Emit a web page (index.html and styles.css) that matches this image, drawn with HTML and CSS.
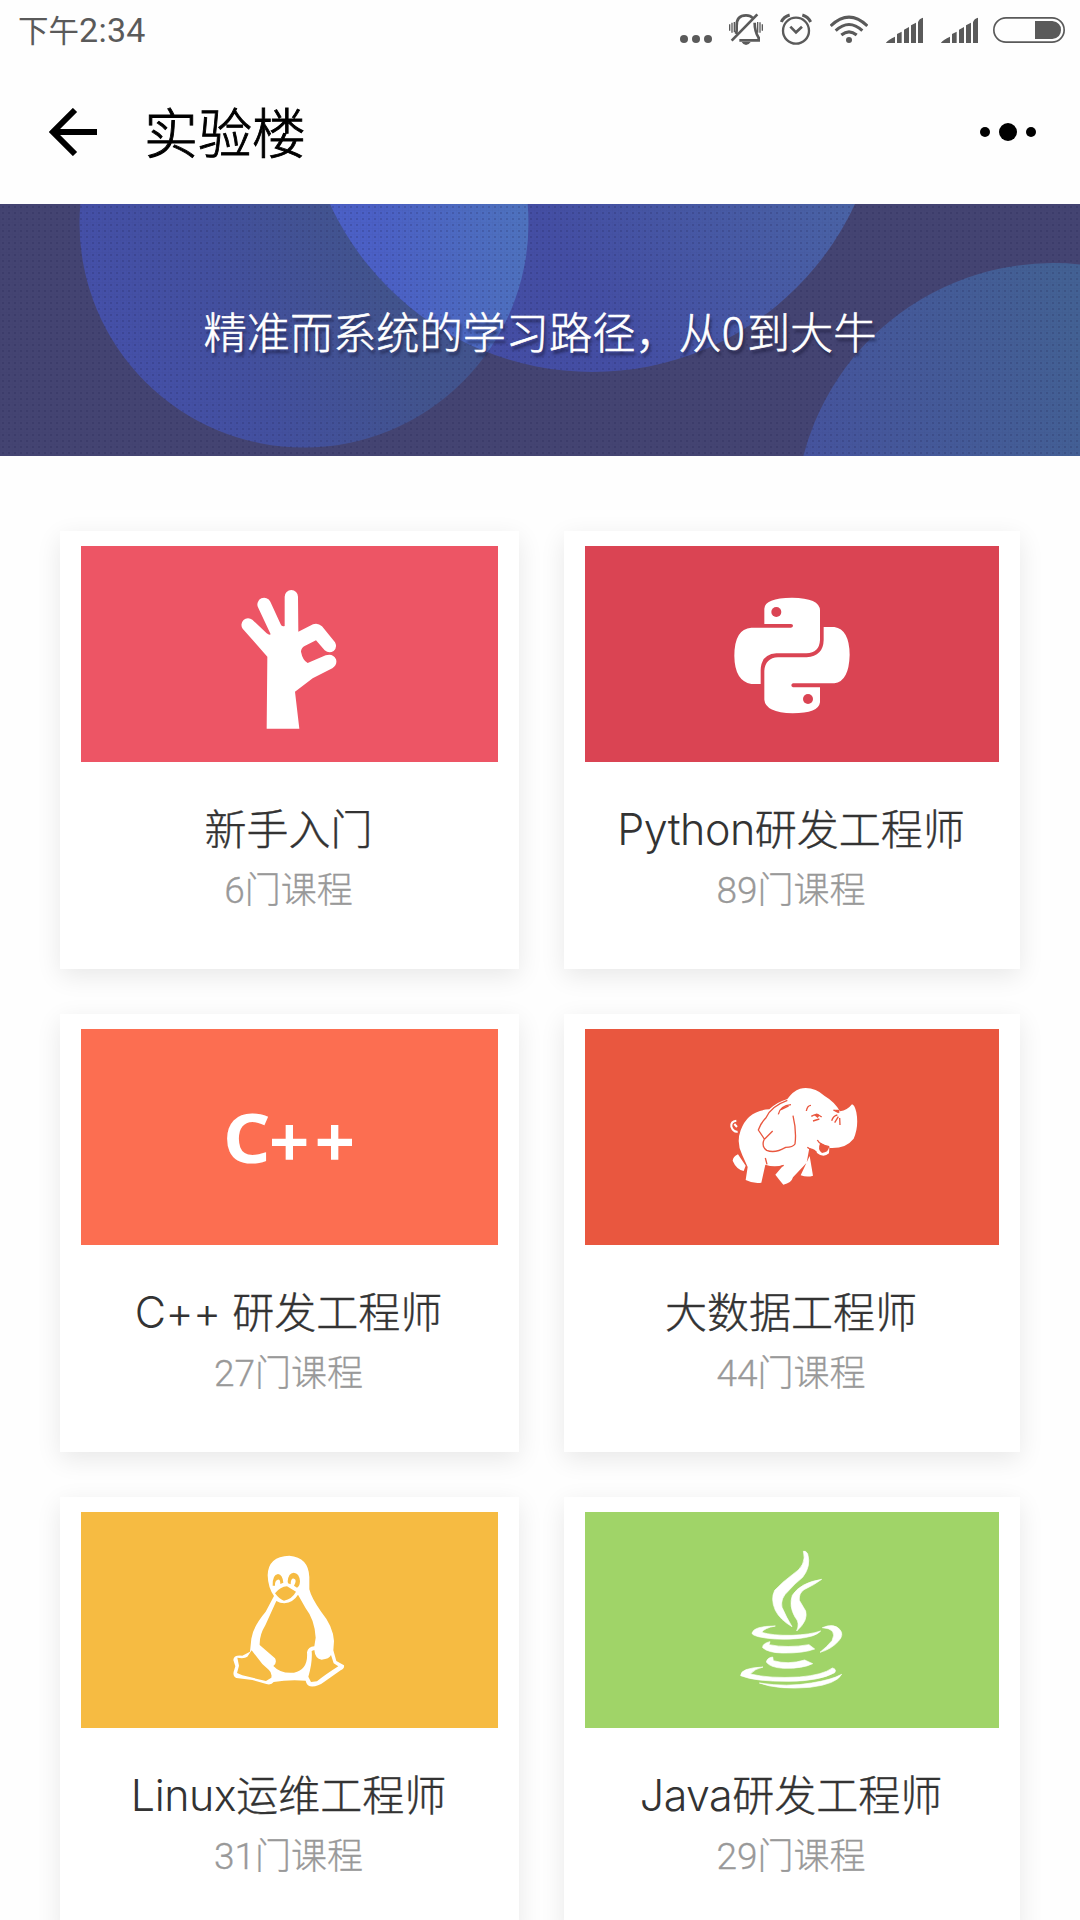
FILE: index.html
```html
<!DOCTYPE html>
<html lang="zh-CN">
<head>
<meta charset="utf-8">
<title>实验楼</title>
<link rel="stylesheet" href="styles.css">
</head>
<body>
<div class="status">
  <div class="time">下午<span class="clock">2:34</span></div>
  <div class="status-icons">
    <svg class="i-dots" width="32" height="33" viewBox="60 39 96 99"><circle cx="72" cy="117" r="12"/><circle cx="108" cy="117" r="12"/><circle cx="144" cy="117" r="12"/></svg>
    <svg class="i-bell" width="34" height="33" viewBox="207 39 102 99"><path class="ln" stroke-width="8" d="M228 102Q231 92 230 78Q229 46 258 46Q272 46 277 53M284 68Q284 95 296 113L296 121H238M215 122L292 43"/><path class="ln" stroke-width="4" d="M209 73V92M216 68V98M223 66V97M293 66V98M300 67V98M307 73V92"/><path d="M245 126H272Q266 135 258 135Q250 135 245 126Z"/></svg>
    <svg class="i-alarm" width="32" height="33" viewBox="360 39 96 99"><circle class="ln" stroke-width="7" cx="408" cy="92" r="39"/><path class="ln" stroke-width="8" d="M391 80L408 97L426 80"/><path class="ln" stroke-width="9" d="M364 66Q371 50 389 45M427 45Q444 50 452 66"/></svg>
    <svg class="i-wifi" width="38" height="33" viewBox="510 39 114 99"><path class="ln" stroke-width="9" d="M512 78Q567 25 622 78M527 92Q567 55 607 92M544 105Q567 86 590 105"/><circle cx="567" cy="120" r="9"/></svg>
    <svg class="i-signal" width="37" height="33" viewBox="678 39 111 99"><path d="M678 128Q685 119 705 110V129H678ZM711 129V102L725 95V129ZM732 129V89L747 81V129ZM753 129V76L768 68V129ZM774 129V67Q776 57 789 53V129Z"/></svg>
    <svg class="i-signal" width="37" height="33" viewBox="678 39 111 99"><path d="M678 128Q685 119 705 110V129H678ZM711 129V102L725 95V129ZM732 129V89L747 81V129ZM753 129V76L768 68V129ZM774 129V67Q776 57 789 53V129Z"/></svg>
    <svg class="i-battery" width="72" height="33" viewBox="999 39 216 99"><rect class="ln" stroke-width="5" x="1001.5" y="53.500" width="211" height="73" rx="36.500"/><path d="M1125 63H1177Q1203 67 1203 90Q1203 113 1177 117H1125Z"/></svg>
  </div>
</div>
<header class="appbar">
  <svg class="back" width="48" height="48" viewBox="0 0 48 48"><path d="M26 2L4 24L26 46M4 24H48"/></svg>
  <h1 class="title">实验楼</h1>
  <svg class="more" width="56" height="18" viewBox="0 0 56 18"><circle cx="5" cy="9" r="5"/><circle cx="28" cy="9" r="9"/><circle cx="51" cy="9" r="5"/></svg>
</header>
<section class="banner">
  <svg class="banner-art" width="1080" height="252" viewBox="0 204 1080 252">
    <defs>
      <linearGradient id="ga" gradientUnits="userSpaceOnUse" x1="80" y1="300" x2="400" y2="180"><stop offset="0" stop-color="#4550aa"/><stop offset=".4" stop-color="#43509f"/><stop offset=".85" stop-color="#42548e"/></linearGradient>
      <linearGradient id="gb" x1="0" y1="1" x2="1" y2=".4"><stop offset="0" stop-color="#454da6"/><stop offset=".42" stop-color="#444ea4"/><stop offset="1" stop-color="#4c6ca6"/></linearGradient>
      <linearGradient id="gab" gradientUnits="userSpaceOnUse" x1="380" y1="260" x2="530" y2="240"><stop offset="0" stop-color="#4b60c6"/><stop offset="1" stop-color="#4e72be"/></linearGradient>
      <linearGradient id="gc" x1="0" y1=".5" x2=".6" y2=".3"><stop offset="0" stop-color="#46529f"/><stop offset="1" stop-color="#436194"/></linearGradient>
      <clipPath id="clipA"><circle cx="304" cy="223" r="224.500"/></clipPath>
      <pattern id="grain" width="6" height="6" patternUnits="userSpaceOnUse"><rect width="2" height="2" x="2" y="2" fill="#20204a" opacity=".2"/><path d="M0 0H6M0 0V6" stroke="#20204a" stroke-width="1" opacity=".08"/></pattern>
    </defs>
    <rect y="204" width="1080" height="252" fill="#444472"/>
    <circle cx="304" cy="223" r="224.500" fill="url(#ga)"/>
    <circle cx="592.500" cy="83" r="289" fill="url(#gb)"/>
    <circle cx="592.500" cy="83" r="289" fill="url(#gab)" clip-path="url(#clipA)"/>
    <circle cx="1053" cy="521" r="258" fill="url(#gc)"/>
    <rect y="204" width="1080" height="252" fill="url(#grain)"/>
  </svg>
  <p class="slogan">精准而系统的学习路径，从<span class="zero">0</span>到大牛</p>
</section>
<main class="grid">
  <article class="card">
    <div class="tile rose"><svg width="417" height="216" viewBox="-417 -72 1251 648"><path fill="#fff" d="M140 476L142 260L68 176A20 20 0 0 1 97 149L140 190Q148 197 152 193L114 112A20 20 0 0 1 151 95L182 163Q185 171 194 168L194 80A20 20 0 0 1 234 80L235 185L279 163Q294 158 306 169L345 217Q353 232 341 243Q327 252 314 241L288 211L254 228Q243 234 243 245Q248 271 263 279L317 256Q339 249 348 268Q353 284 337 295L278 325L225 365L238 476Z"/></svg></div>
    <h2 class="name">新手入门</h2>
    <p class="count"><span class="num">6</span>门课程</p>
  </article>
  <article class="card">
    <div class="tile crimson"><svg width="414" height="216" viewBox="-375 -72 1242 648"><path fill="#fff" d="M163 162V116Q164 84 246 83Q329 84 330 121V210Q328 249 289 250H199Q153 253 152 300V342H124Q74 333 73 258Q73 176 124 173H243Q249 172 249 167Q249 162 243 162ZM341 171H373Q418 178 419 254Q417 334 373 340H249Q244 341 244 346Q244 351 249 352H330V397Q326 430 248 430Q166 427 163 389V302Q166 264 204 262H290Q340 258 341 210Z"/><circle class="cut" cx="199" cy="126" r="15"/><circle class="cut" cx="294" cy="387" r="15"/></svg></div>
    <h2 class="name"><span class="lat">Python</span>研发工程师</h2>
    <p class="count"><span class="num">89</span>门课程</p>
  </article>
  <article class="card">
    <div class="tile coral"><svg width="417" height="216" viewBox="-387 -183 1251 648"><text class="logo-c" x="38" y="218" textLength="144" lengthAdjust="spacingAndGlyphs">C</text><path fill="#fff" d="M227 105H249V146H289V168H249V209H227V168H186V146H227ZM363 105H385V146H426V168H385V209H363V168H323V146H363Z"/></svg></div>
    <h2 class="name"><span class="lat">C++ </span>研发工程师</h2>
    <p class="count"><span class="num">27</span>门课程</p>
  </article>
  <article class="card">
    <div class="tile brick"><svg width="414" height="216" viewBox="-375 -123 1242 648"><path fill="#fff" d="M178 118Q113 121 92 181Q78 219 97 256L113 291L107 330Q131 342 154 338L166 284Q192 293 221 285L196 314Q209 331 220 344Q244 340 249 322L290 278L298 234Q318 238 320 248Q340 265 357 250L358 234Q407 237 431 206Q447 169 439 127Q434 105 426 103Q412 121 390 124Q373 95 344 78Q311 48 270 56Q249 63 232 87Q199 97 178 118ZM84 253Q69 260 68 272Q79 298 101 303L107 287ZM299 258L272 316Q292 323 309 317Z"/><path class="tail" d="M79 152Q62 154 64 170Q70 187 83 185M73 162L81 171"/><path class="seam" d="M232 91Q183 109 168 143Q153 158 145 180L163 207Q153 229 170 241Q195 251 227 232Q249 232 255 222Q260 183 249 137M205 133Q211 107 243 104M213 119L236 108M164 207L188 183M292 232Q301 240 320 247M171 283L166 264M221 286L208 291M289 123Q292 106 303 106M304 139Q320 128 335 141M309 153L328 147M370 120L386 128M365 152Q370 137 382 135M374 158L385 140M390 165L389 144M322 210Q330 225 355 229L358 233"/><path class="cut" d="M312 135Q320 125 329 136L323 144ZM331 218L357 231Q356 247 336 249Q321 239 331 218ZM371 119L388 119V129Z"/></svg></div>
    <h2 class="name">大数据工程师</h2>
    <p class="count"><span class="num">44</span>门课程</p>
  </article>
  <article class="card">
    <div class="tile amber"><svg width="417" height="216" viewBox="-417 -84 1251 648"><path fill="#fff" fill-rule="evenodd" d="M143 106Q144 49 208 47Q266 52 268 111V148Q274 174 304 216Q339 258 342 303L340 331L349 363L372 376Q374 386 362 391L312 426Q291 442 270 439Q259 434 257 422Q206 418 161 426Q154 436 139 432L97 420L49 414Q38 409 41 395L46 379L40 360Q41 344 67 347L90 335L94 296Q99 260 137 215L162 168Q144 143 143 106ZM169 183L136 256Q118 285 119 315L165 355Q172 368 160 378Q182 402 222 398Q265 388 261 337Q264 320 283 319L287 293Q284 239 257 205L234 164Q220 187 193 190Q180 190 169 183ZM95 331L82 350Q73 357 52 353L57 377L51 399L67 406L138 423L154 413Q157 398 146 389L127 372ZM275 333Q278 367 265 410L273 426L291 424Q314 405 355 379L341 370L333 345Q328 357 305 359Q285 356 283 330Z"/><path class="cut" d="M158 137Q157 104 174 102Q188 104 190 128L181 132Q181 117 173 119Q164 122 165 137ZM203 124Q205 99 221 98Q238 99 240 124Q239 140 231 143L222 137Q232 119 222 116Q212 114 212 133L204 130ZM165 160Q181 140 201 139L228 155Q216 177 192 182Q180 180 165 160Z"/></svg></div>
    <h2 class="name"><span class="lat">Linux</span>运维工程师</h2>
    <p class="count"><span class="num">31</span>门课程</p>
  </article>
  <article class="card">
    <div class="tile green"><svg width="414" height="216" viewBox="-405 -84 1242 648"><path fill="#fff" stroke="#fff" stroke-width="2" d="M250 34Q257 31 263 41Q274 79 248 112Q224 131 205 153Q180 175 186 202Q200 234 216 260Q180 239 166 211Q151 178 164 151Q187 126 217 104Q262 76 250 34ZM305 118Q284 134 252 149Q236 160 238 181L257 213Q265 242 230 273Q241 248 225 231Q206 198 217 166Q241 128 305 118ZM166 258Q133 264 125 277Q158 287 216 286Q270 284 302 273Q287 291 230 296Q160 301 115 290Q95 284 96 279Q101 258 166 258ZM307 263Q342 248 360 269Q373 285 355 304Q333 328 300 337Q320 321 336 302Q354 266 307 263ZM150 305L147 314Q202 325 267 314L284 327Q250 340 187 339Q144 338 128 323Q127 310 150 305ZM158 351L160 362Q206 375 254 360L278 371Q248 386 190 385Q149 382 139 366Q142 353 158 351ZM129 381Q105 386 91 402Q148 416 238 411Q309 405 337 384Q351 387 344 398Q298 423 207 424Q106 425 62 407Q61 384 129 381ZM118 429Q203 442 274 429Q334 420 365 403Q350 432 270 442Q174 450 118 429Z"/></svg></div>
    <h2 class="name"><span class="lat">Java</span>研发工程师</h2>
    <p class="count"><span class="num">29</span>门课程</p>
  </article>
</main>
</body>
</html>
```

FILE: styles.css
```css
* { box-sizing: border-box; margin: 0; padding: 0; }
html, body { height: 1920px; overflow: hidden; }
body {
  width: 1080px;
  background: #fefefe;
  font-family: "Noto Sans CJK SC", sans-serif;
  font-weight: 300;
}
svg { display: block; }

.status {
  height: 60px;
  padding: 0 15px 0 18px;
  display: flex;
  justify-content: space-between;
  color: #5a5a5a;
}
.time { font-size: 30.5px; line-height: 59px; font-weight: 400; white-space: nowrap; }
.clock { font-family: Roboto, sans-serif; font-size: 34px; line-height: 0; letter-spacing: .3px; }
.status-icons { display: flex; padding-top: 13px; fill: #5a5a5a; }
.ln { fill: none; stroke: #5a5a5a; }
.i-bell, .i-alarm { margin-left: 17px; }
.i-wifi, .i-signal { margin-left: 18px; }
.i-battery { margin-left: 15px; }

.appbar {
  height: 144px;
  padding: 0 44px 0 49px;
  display: flex;
  align-items: center;
}
.back { fill: none; stroke: #000; stroke-width: 6; }
.title {
  margin-left: 47px;
  padding-bottom: 2px;
  font-size: 54px;
  line-height: 80px;
  font-weight: 300;
  color: #000;
  -webkit-text-stroke: .9px #000;
}
.more { margin-left: auto; }

.banner { display: grid; height: 252px; }
.banner-art, .slogan { grid-area: 1 / 1; }
.slogan {
  place-self: center;
  z-index: 1;
  font-size: 43.2px;
  line-height: 64px;
  color: #fff;
  white-space: nowrap;
  -webkit-text-stroke: .6px #fff;
  text-shadow: 2px 4px 3px rgba(20, 20, 50, .6);
}
.zero { letter-spacing: 2px; }

.grid {
  display: grid;
  grid-template-columns: 459px 456px;
  grid-auto-rows: 438px;
  gap: 45px;
  padding: 75px 60px 0;
}
.card {
  padding: 15px 21px 0;
  background: #fff;
  text-align: center;
  white-space: nowrap;
  box-shadow: 0 7px 24px rgba(0, 0, 0, .09);
}
.tile { height: 216px; }
.rose { background: #ed5565; }
.crimson { background: #da4453; }
.coral { background: #fc6e51; }
.brick { background: #e9573f; }
.amber { background: #f6bb42; }
.green { background: #a0d468; }
.crimson .cut { fill: #da4453; }
.brick .cut { fill: #e9573f; }
.amber .cut { fill: #f6bb42; }
.seam { fill: none; stroke: #e9573f; stroke-width: 4; stroke-linejoin: round; }
.tail { fill: none; stroke: #fff; stroke-width: 6; }
.logo-c { font-family: "Open Sans", sans-serif; font-weight: 700; font-size: 206px; fill: #fff; }

.name {
  margin-top: 35px;
  padding-right: 2px;
  font-size: 42px;
  line-height: 60px;
  font-weight: 300;
  color: #333;
  -webkit-text-stroke: .4px #333;
}
.lat { font-family: Inter, sans-serif; font-size: 43px; line-height: 0; letter-spacing: -.5px; -webkit-text-stroke: 0; }
.count {
  margin-top: 6px;
  padding-right: 2px;
  font-size: 36px;
  line-height: 48px;
  color: #999;
  -webkit-text-stroke: .3px #999;
}
.num { font-family: Roboto, sans-serif; font-size: 37px; line-height: 0; }
```
